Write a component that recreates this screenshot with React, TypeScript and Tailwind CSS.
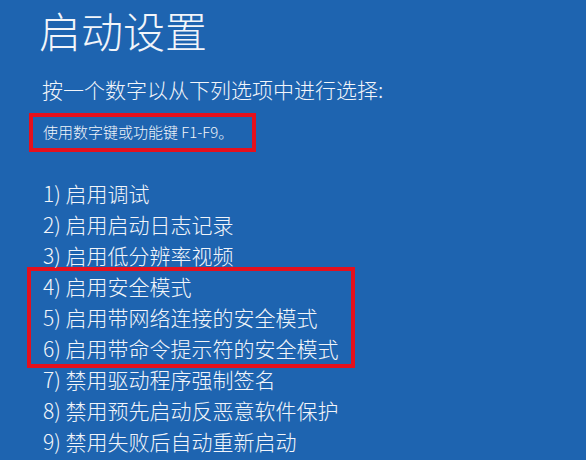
import React from 'react';

const options = [
  '启用调试',
  '启用启动日志记录',
  '启用低分辨率视频',
  '启用安全模式',
  '启用带网络连接的安全模式',
  '启用带命令提示符的安全模式',
  '禁用驱动程序强制签名',
  '禁用预先启动反恶意软件保护',
  '禁用失败后自动重新启动',
];

const Row: React.FC<{ n: number; label: string }> = ({ n, label }) => (
  <div className="h-[31px] leading-[31px] whitespace-nowrap">
    {n}) {label}
  </div>
);

const App: React.FC = () => {
  return (
    <div
      className="w-[586px] h-[460px] overflow-hidden bg-[#1e64b0] text-[#f2f5fa] pl-[28px]"
      style={{ fontFamily: '"Noto Sans CJK SC", "Noto Sans", sans-serif' }}
    >
      {/* Title */}
      <h1 className="pt-[1px] ml-[11px] text-[42px] leading-[58px] font-light">启动设置</h1>

      <p className="mt-[15px] ml-[14px] text-[21px] leading-[30px] font-light">
        按一个数字以从下列选项中进行选择:
      </p>

      {/* Highlighted hint */}
      <div className="mt-[9px] ml-px w-[227px] h-[39px] border-4 border-[#e5101d] flex items-center pl-[10px] text-[15px] font-light whitespace-nowrap">
        使用数字键或功能键 F1-F9。
      </div>

      {/* Options */}
      <div className="mt-[26px] text-[21px] font-light">
        <div className="pl-[15px]">
          {options.slice(0, 3).map((o, i) => (
            <Row key={i} n={i + 1} label={o} />
          ))}
        </div>
        <div className="-my-[4px] -ml-px w-[328px] border-4 border-[#e5101d] pl-[12px]">
          {options.slice(3, 6).map((o, i) => (
            <Row key={i} n={i + 4} label={o} />
          ))}
        </div>
        <div className="pl-[15px]">
          {options.slice(6).map((o, i) => (
            <Row key={i} n={i + 7} label={o} />
          ))}
        </div>
      </div>
    </div>
  );
};

export default App;
